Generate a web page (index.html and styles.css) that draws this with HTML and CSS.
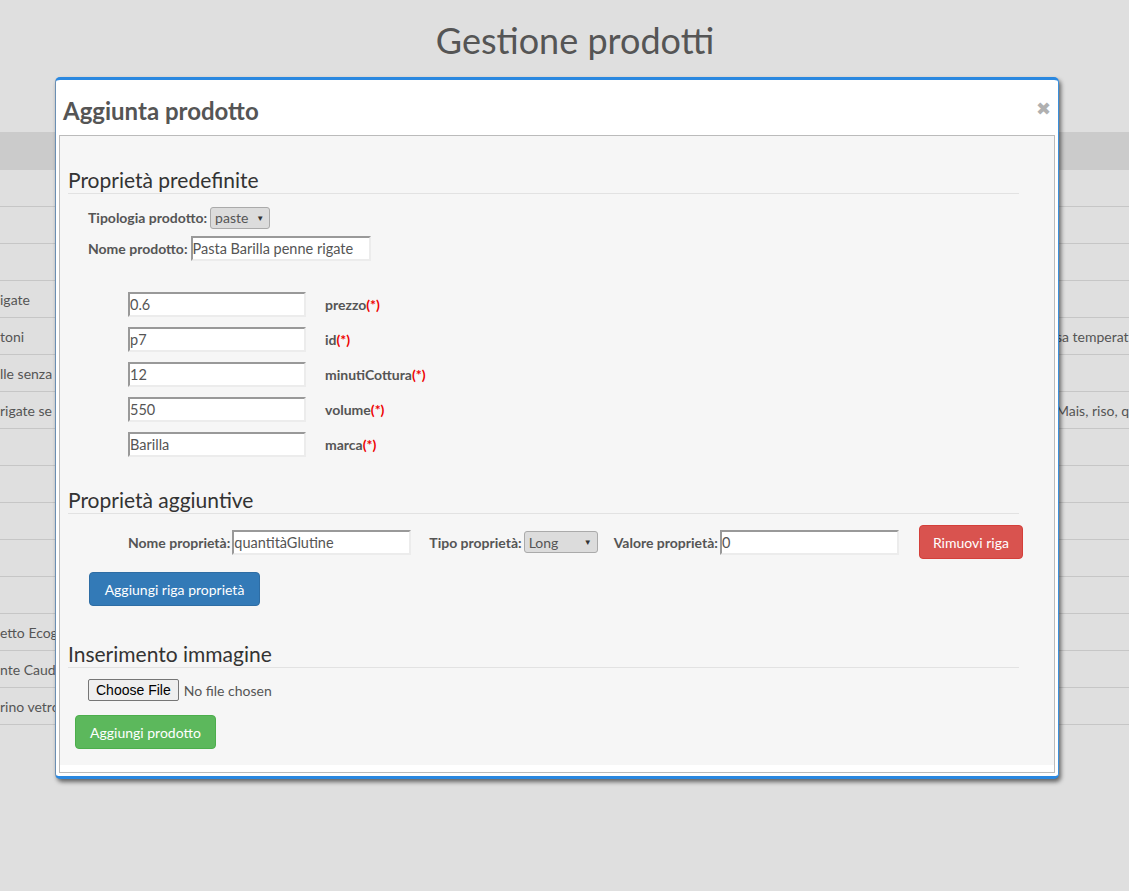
FILE: index.html
```html
<!DOCTYPE html>
<html lang="it">
<head>
<meta charset="utf-8">
<title>Gestione prodotti</title>
<link rel="stylesheet" href="styles.css">
</head>
<body>
<h1 class="title">Gestione prodotti</h1>

<div class="bg-table">
  <div class="bg-head"></div>
  <div class="bg-row"><span class="cell-l"></span><span class="cell-r"></span></div>
  <div class="bg-row"><span class="cell-l"></span><span class="cell-r"></span></div>
  <div class="bg-row"><span class="cell-l"></span><span class="cell-r"></span></div>
  <div class="bg-row"><span class="cell-l">igate</span><span class="cell-r"></span></div>
  <div class="bg-row"><span class="cell-l">toni</span><span class="cell-r">sa temperat</span></div>
  <div class="bg-row"><span class="cell-l">lle senza</span><span class="cell-r"></span></div>
  <div class="bg-row"><span class="cell-l">rigate se</span><span class="cell-r">Mais, riso, qu</span></div>
  <div class="bg-row"><span class="cell-l"></span><span class="cell-r"></span></div>
  <div class="bg-row"><span class="cell-l"></span><span class="cell-r"></span></div>
  <div class="bg-row"><span class="cell-l"></span><span class="cell-r"></span></div>
  <div class="bg-row"><span class="cell-l"></span><span class="cell-r"></span></div>
  <div class="bg-row"><span class="cell-l"></span><span class="cell-r"></span></div>
  <div class="bg-row"><span class="cell-l">etto Ecogreen</span><span class="cell-r"></span></div>
  <div class="bg-row"><span class="cell-l">nte Caudalie</span><span class="cell-r"></span></div>
  <div class="bg-row"><span class="cell-l">rino vetro</span><span class="cell-r"></span></div>
</div>

<div class="modal">
  <div class="modal-header">
    <h2 class="modal-title">Aggiunta prodotto</h2>
    <span class="close">&#x2716;</span>
  </div>
  <div class="modal-body">
    <div class="panel">
      <h3 class="section">Proprietà predefinite</h3>
      <div class="line-row">
        <span class="lbl">Tipologia prodotto:</span>
        <span class="select sel-paste">paste<span class="arrow">&#9660;</span></span>
      </div>
      <div class="line-row">
        <span class="lbl">Nome prodotto:</span>
        <span class="input in-name">Pasta Barilla penne rigate</span>
      </div>

      <div class="props">
        <div class="prop-row"><span class="input in-prop">0.6</span><span class="lbl">prezzo<span class="req">(*)</span></span></div>
        <div class="prop-row"><span class="input in-prop">p7</span><span class="lbl">id<span class="req">(*)</span></span></div>
        <div class="prop-row"><span class="input in-prop">12</span><span class="lbl">minutiCottura<span class="req">(*)</span></span></div>
        <div class="prop-row"><span class="input in-prop">550</span><span class="lbl">volume<span class="req">(*)</span></span></div>
        <div class="prop-row"><span class="input in-prop">Barilla</span><span class="lbl">marca<span class="req">(*)</span></span></div>
      </div>

      <h3 class="section sec-2">Proprietà aggiuntive</h3>
      <div class="extra-row">
        <span class="lbl">Nome proprietà:</span>
        <span class="input in-extra">quantitàGlutine</span>
        <span class="lbl lbl-gap">Tipo proprietà:</span>
        <span class="select sel-long">Long<span class="arrow">&#9660;</span></span>
        <span class="lbl lbl-gap2">Valore proprietà:</span>
        <span class="input in-extra">0</span>
        <span class="btn btn-danger">Rimuovi riga</span>
      </div>
      <div class="add-row">
        <span class="btn btn-primary">Aggiungi riga proprietà</span>
      </div>

      <h3 class="section sec-3">Inserimento immagine</h3>
      <div class="file-row">
        <span class="file-btn">Choose File</span>
        <span class="file-text">No file chosen</span>
      </div>
      <div class="submit-row">
        <span class="btn btn-success">Aggiungi prodotto</span>
      </div>
    </div>
  </div>
</div>
</body>
</html>
```
FILE: styles.css
```css
html, body {
  margin: 0;
  padding: 0;
}
body {
  background: #dfdfdf;
  font-family: Lato, "Noto Sans", sans-serif;
  color: #555;
  width: 1129px;
  height: 891px;
  overflow: hidden;
  position: relative;
}
.title {
  margin: 0;
  padding: 18px 0 0 21px;
  height: 132px;
  box-sizing: border-box;
  text-align: center;
  font-weight: 400;
  font-size: 36px;
  line-height: 44px;
  color: #555;
}
.bg-table {
  display: flex;
  flex-direction: column;
}
.bg-head {
  height: 38px;
  background: #cbcbcb;
}
.bg-row {
  height: 36px;
  border-bottom: 1px solid #c6c6c6;
  display: flex;
  align-items: center;
  justify-content: space-between;
  font-size: 14px;
  color: #555;
  white-space: nowrap;
}
.cell-l {
  width: 200px;
  overflow: hidden;
}
.cell-r {
  width: 76px;
  padding-left: 3px;
  box-sizing: border-box;
  overflow: hidden;
}

/* modal */
.modal {
  position: absolute;
  left: 55px;
  top: 77px;
  width: 1004px;
  height: 702px;
  box-sizing: border-box;
  background: #fff;
  border: 1px solid #3a8fdc;
  border-left-color: #6b8fb3;
  border-top: 3px solid #2a88e0;
  border-bottom: 3px solid #2a88e0;
  border-radius: 5px;
  box-shadow: 2px 3px 4px rgba(0, 0, 0, 0.55);
}
.modal-header {
  height: 55px;
  display: flex;
  align-items: flex-start;
  justify-content: space-between;
  padding: 0 7px 0 7px;
}
.modal-title {
  margin: 17px 0 0 0;
  font-size: 24px;
  line-height: 28px;
  font-weight: 700;
  color: #555;
}
.close {
  margin-top: 18px;
  font-size: 18px;
  color: #b0b0b0;
  line-height: 20px;
}
.modal-body {
  padding: 0 3px 3px 3px;
}
.panel {
  border: 1px solid #bbb;
  background: #f6f6f6;
  box-shadow: inset 0 -7px 0 #fff;
  padding: 0 35px 7px 8px;
  height: 638px;
  box-sizing: border-box;
}
.section {
  margin: 31px 0 0 0;
  font-size: 21px;
  line-height: 26px;
  font-weight: 400;
  color: #333;
  border-bottom: 1px solid #e2e2e2;
  padding-bottom: 0;
}
.sec-2 { margin-top: 30px; }
.sec-3 { margin-top: 35px; }

.lbl {
  font-size: 14px;
  font-weight: 700;
  color: #555;
  white-space: nowrap;
  flex-shrink: 0;
}
.req {
  color: #e00;
}
.line-row {
  display: flex;
  align-items: center;
  gap: 3px;
  padding-left: 20px;
  height: 25px;
}
.section + .line-row { margin-top: 11px; }
.line-row + .line-row { margin-top: 6px; }

.input {
  display: inline-flex;
  align-items: center;
  box-sizing: border-box;
  height: 25px;
  background: #fff;
  border: 2px solid;
  border-color: #999 #ececec #ececec #999;
  font-size: 14.5px;
  color: #555;
  padding-left: 0;
  white-space: nowrap;
  overflow: hidden;
  flex-shrink: 0;
}
.in-name { width: 180px; }
.in-prop { width: 178px; }
.in-extra { width: 179px; }

.select {
  display: inline-flex;
  align-items: center;
  justify-content: space-between;
  box-sizing: border-box;
  height: 22px;
  background: #dcdcdc;
  border: 1px solid #aaa;
  border-radius: 3px;
  font-size: 14px;
  color: #555;
  padding: 0 5px 0 4px;
  flex-shrink: 0;
}
.arrow {
  font-size: 8px;
  color: #333;
}
.sel-paste { width: 60px; }
.sel-long { width: 74px; }

.props {
  margin-top: 31px;
  padding-left: 60px;
  display: flex;
  flex-direction: column;
  gap: 10px;
}
.prop-row {
  display: flex;
  align-items: center;
  gap: 19px;
}

.extra-row {
  margin-top: 11px;
  padding-left: 60px;
  display: flex;
  align-items: center;
  gap: 2px;
}
.lbl-gap { margin-left: 16px; }
.lbl-gap2 { margin-left: 14px; }
.btn-danger { margin-left: 18px; }

.btn {
  display: inline-flex;
  align-items: center;
  justify-content: center;
  box-sizing: border-box;
  height: 34px;
  padding: 0 10px;
  font-size: 14px;
  color: #fff;
  border-radius: 4px;
  border: 1px solid transparent;
  white-space: nowrap;
  flex-shrink: 0;
}
.btn-danger { background: #d9534f; border-color: #d43f3a; width: 104px; }
.btn-primary { background: #337ab7; border-color: #2e6da4; width: 171px; }
.btn-success { background: #5cb85c; border-color: #4cae4c; width: 141px; }

.add-row {
  margin-top: 13px;
  padding-left: 21px;
}
.file-row {
  margin-top: 11px;
  padding-left: 20px;
  display: flex;
  align-items: center;
  gap: 5px;
  height: 22px;
}
.file-btn {
  display: inline-flex;
  align-items: center;
  box-sizing: border-box;
  height: 22px;
  padding: 0 7px;
  background: #efefef;
  border: 1px solid #767676;
  border-radius: 2px;
  font-family: "Liberation Sans", Arial, sans-serif;
  font-size: 14px;
  color: #000;
}
.file-text {
  font-size: 14px;
  color: #555;
}
.submit-row {
  margin-top: 14px;
  padding-left: 7px;
}
```
